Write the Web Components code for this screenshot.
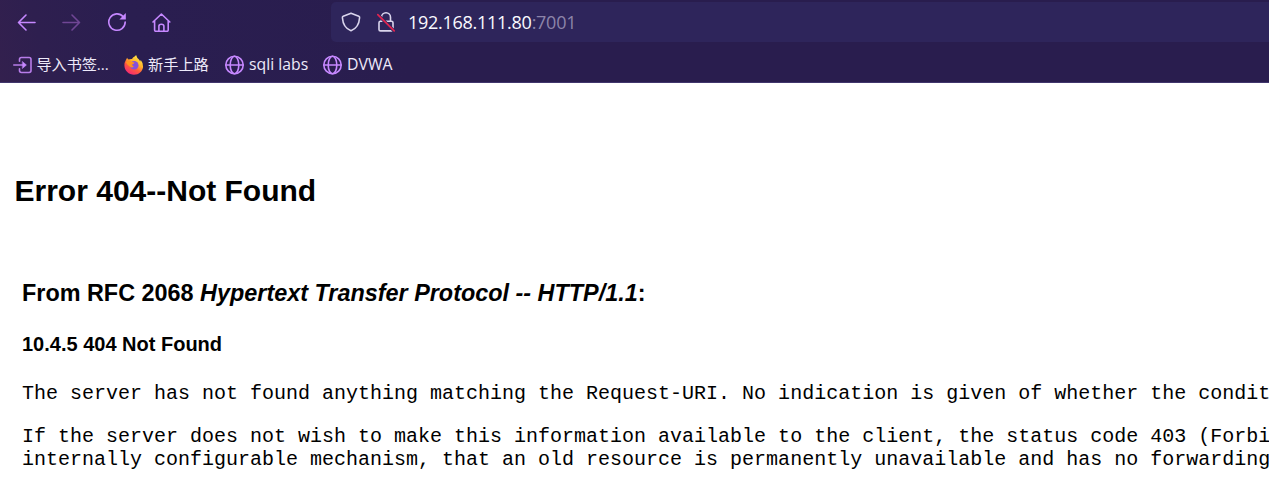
<!DOCTYPE html>
<html lang="zh-CN">
<head>
<meta charset="utf-8">
<title>Error 404--Not Found</title>
<style>html,body{margin:0;height:100%;background:#fff;overflow:hidden}</style>
</head>
<body>
<browser-window></browser-window>
<script>
const define = (name, html) => customElements.define(name, class extends HTMLElement {
  constructor() {
    super();
    this.attachShadow({mode: 'open'}).innerHTML = html;
  }
});

const icons = {
  back: `<path d="M18 10.500H1.500M9 3L1.500 10.500l7.500 7.500" stroke="#c688ff"/>`,
  forward: `<path d="M1 10.500h16.500M10 3L17.500 10.500 10 18" stroke="#704695"/>`,
  reload: `<path d="M16.200 4.700A8.200 8.200 0 1 0 18.200 10" stroke="#c688ff"/><path d="M18.800 1v6.400h-6.400z" fill="#c688ff"/>`,
  home: `<path d="M1 10L9.400 2l8.400 8M2.600 9v9q0 1.300 1.300 1.300h11q1.300 0 1.300-1.300V9M6.900 19v-4.800q0-2 2.500-2t2.500 2V19" stroke="#c688ff"/>`,
  shield: `<path d="M10 1.200L17.800 4.200Q18.800 4.600 18.600 5.800C18.200 11.500 16.500 16.300 10 18.800C3.500 16.300 1.800 11.500 1.400 5.800Q1.200 4.600 2.200 4.200Z" stroke="#dad5ed"/>`,
  lock: `<path d="M5.500 8.500V5.300a4.500 4.500 0 0 1 9 0v3.200M4.500 9.200h11q1.500 0 1.500 1.500v6.700q0 1.500-1.500 1.500h-11q-1.500 0-1.500-1.500v-6.700Q3 9.200 4.500 9.200z" stroke="#dad5ed"/><path d="M1.800 2.600L18 18.900" stroke="#2e255b" stroke-width="3.200"/><path d="M1.800 2.600L18.200 18.900" stroke="#e12450" stroke-width="1.700"/>`,
  import: `<path d="M6.500 6.200V4.400Q6.500 2.500 8.400 2.500h7.700Q18 2.500 18 4.400v11.200q0 1.900-1.900 1.900H8.400q-1.900 0-1.900-1.900v-1.800M.8 10h10.500" stroke="#b77ce9"/><path d="M9.600 6.700L13.400 10l-3.800 3.300z" fill="#c688ff" stroke="#c688ff" stroke-width=".6"/>`,
  globe: `<circle cx="10.500" cy="10" r="8.700" stroke="#c688ff"/><ellipse cx="10.500" cy="10" rx="4.300" ry="8.700" stroke="#c688ff"/><path d="M2 10h17" stroke="#c688ff"/>`,
  firefox: `<defs><linearGradient id="f" x1=".85" y1="0" x2=".25" y2="1"><stop stop-color="#fff44f"/><stop offset=".4" stop-color="#ffb52b"/><stop offset=".65" stop-color="#ff593d"/><stop offset="1" stop-color="#f52479"/></linearGradient></defs><path d="M1.800 5.200L3.100 2.800Q3.500 4.100 4.600 4.400Q6 3.900 8 4Q8.800 2.400 10.600 1.500Q11.500.8 12.100 0Q13 3.200 15 4.600Q15.800 5.600 16.100 6.500L16.800 5Q19.500 8.300 19.100 12C18.500 16.500 14.800 19.700 10 19.700C4.700 19.700.6 15.800.4 10.500Q.3 7.400 1.800 5.200z" fill="url(#f)"/><circle cx="10.200" cy="10.200" r="4.300" fill="#8650dc"/><path d="M1.800 7.200Q5.600 4.500 8.200 7.100L10.500 7.400Q10 8.900 8.200 9.200Q8 11 9.800 11.700Q8.200 13 6 11.800Q3.600 10.400 1.800 7.200z" fill="#ff9320"/>`
};
customElements.define('ui-icon', class extends HTMLElement {
  connectedCallback() {
    this.attachShadow({mode: 'open'}).innerHTML = `<style>:host{display:block;width:20px;height:20px;flex:none}svg{display:block}</style>
    <svg width="20" height="20" viewBox="0 0 20 20" fill="none" stroke-width="1.600" stroke-linecap="round" stroke-linejoin="round">${icons[this.getAttribute('name')]}</svg>`;
  }
});

define('book-mark', `<style>:host{display:flex;align-items:center;gap:4px;white-space:nowrap;font:15.800px/22px "Open Sans","Noto Sans CJK SC",sans-serif;color:#eeeafa}::slotted(ui-icon){margin-top:1px}span{margin-top:-1px}</style><slot name="icon"></slot><span><slot></slot></span>`);

define('address-bar', `<style>
:host{display:flex;align-items:center;flex:1;height:40px;box-sizing:border-box;padding-left:10px;background:#2e255b;border-radius:5px 0 0 5px;font:18px/24px "Open Sans",sans-serif;letter-spacing:-.270px;color:#fbfaff}
ui-icon+ui-icon{margin-left:15px}.url{margin-left:12px}.port{color:#8c84a9}
</style><ui-icon name="shield"></ui-icon><ui-icon name="lock"></ui-icon><span class="url">192.168.111.80<span class="port">:7001</span></span>`);

define('nav-bar', `<style>
:host{display:flex;height:40px;padding-top:2px}
.buttons{display:flex;align-items:center;gap:25px;padding-left:17px;width:314px;flex:none}
</style><div class="buttons"><ui-icon name="back"></ui-icon><ui-icon name="forward"></ui-icon><ui-icon name="reload"></ui-icon><ui-icon name="home"></ui-icon></div><address-bar></address-bar>`);

define('bookmark-bar', `<style>
:host{display:flex;align-items:center;height:40px;box-sizing:border-box;padding:5px 0 0 12.500px}
.a{width:111.500px}.b{width:100px}.c{width:98px}.a,.b{font-size:15.200px}.c,.d{gap:5px}.a{letter-spacing:-.100px}
</style><book-mark class="a"><ui-icon slot="icon" name="import"></ui-icon>导入书签...</book-mark><book-mark class="b"><ui-icon slot="icon" name="firefox"></ui-icon>新手上路</book-mark><book-mark class="c"><ui-icon slot="icon" name="globe"></ui-icon>sqli labs</book-mark><book-mark class="d"><ui-icon slot="icon" name="globe"></ui-icon>DVWA</book-mark>`);

define('error-page', `<style>
:host{display:block;padding:90px 0 0 14.500px;color:#000;font-family:"Liberation Sans",Arial,sans-serif;white-space:nowrap}
h1,h2,h3,pre{margin:0}
h1{font-size:30px;line-height:36px}
section{padding:70px 0 0 7.500px}
h2{font-size:23.400px;line-height:28px}
h3{font-size:20px;line-height:24px;margin-top:25px}
pre{font:20px/23px "Liberation Mono","Courier New",monospace;margin-top:26px}
pre+pre{margin-top:20px}
</style><h1>Error 404--Not Found</h1><section><h2>From RFC 2068 <i>Hypertext Transfer Protocol -- HTTP/1.1</i>:</h2><h3>10.4.5 404 Not Found</h3><pre>The server has not found anything matching the Request-URI. No indication is given of whether the condit</pre><pre>If the server does not wish to make this information available to the client, the status code 403 (Forbi
internally configurable mechanism, that an old resource is permanently unavailable and has no forwarding</pre></section>`);

define('browser-window', `<style>
:host{display:block;width:100%;height:100vh;overflow:hidden;background:#fff}
header{height:83px;box-sizing:border-box;border-bottom:1px solid #41366d;background:linear-gradient(75deg,#33204e 0,#2e1f4f 50px,#2a1e50 140px,#291d4e 400px)}
</style><header><nav-bar></nav-bar><bookmark-bar></bookmark-bar></header><error-page></error-page>`);
</script>
</body>
</html>
